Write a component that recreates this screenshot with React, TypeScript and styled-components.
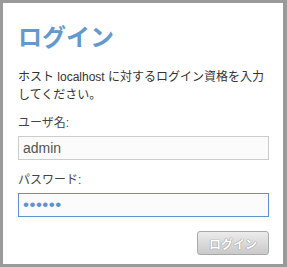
import styled, { createGlobalStyle } from "styled-components";

const GlobalStyle = createGlobalStyle`
  html, body {
    margin: 0;
    padding: 0;
    background: #ffffff;
  }
  * {
    box-sizing: border-box;
  }
`;

const Frame = styled.div`
  width: 287px;
  height: 267px;
  border: 3px solid #9a9a9a;
  border-right-width: 4px;
  background: #ffffff;
  padding: 18px 14px 0 15px;
  font-family: "Liberation Sans", "Noto Sans CJK JP", sans-serif;
  color: #333333;
`;

const Title = styled.h1`
  margin: 0;
  font-family: "Noto Sans CJK JP", sans-serif;
  font-size: 24px;
  line-height: 30px;
  font-weight: 700;
  color: #6399d0;
`;

const Message = styled.p`
  margin: 17px 0 0;
  font-size: 12px;
  line-height: 18px;
`;

const Field = styled.div<{ $gap: number }>`
  display: flex;
  flex-direction: column;
  gap: 4px;
  margin-top: ${({ $gap }) => $gap}px;
`;

const Label = styled.label`
  font-size: 12px;
  line-height: 18px;
  color: #444444;
`;

const TextInput = styled.input<{ $focused?: boolean }>`
  width: 100%;
  height: 24px;
  margin: 0;
  padding: 0 4px;
  border: 1px solid ${({ $focused }) => ($focused ? "#5b95cf" : "#cccccc")};
  background: #fbfbfb;
  font-family: "Liberation Sans", sans-serif;
  font-size: ${({ $focused }) => ($focused ? "17px" : "14px")};
  color: ${({ $focused }) => ($focused ? "#5b95cf" : "#555555")};
  caret-color: #333333;
  outline: none;
  letter-spacing: ${({ $focused }) => ($focused ? "0.5px" : "0")};
`;

const Actions = styled.div`
  display: flex;
  justify-content: flex-end;
  margin-top: 14px;
`;

const SubmitButton = styled.button`
  width: 72px;
  height: 24px;
  border: 1px solid #a9a9a9;
  border-radius: 3px;
  background: linear-gradient(#ececec, #c9c9c9);
  font-family: "Noto Sans CJK JP", sans-serif;
  font-size: 12px;
  font-weight: 700;
  color: #ffffff;
  text-shadow: 0 0 1px #8a8a8a, 0 0 1px #8a8a8a;
  padding: 0;
`;

const App = () => {
  return (
    <>
      <GlobalStyle />
      <Frame>
        <Title>ログイン</Title>
        <Message>ホスト localhost に対するログイン資格を入力してください。</Message>
        <Field $gap={10}>
          <Label>ユーザ名:</Label>
          <TextInput type="text" defaultValue="admin" />
        </Field>
        <Field $gap={11}>
          <Label>パスワード:</Label>
          <TextInput type="password" defaultValue="secret" $focused autoFocus />
        </Field>
        <Actions>
          <SubmitButton type="button">ログイン</SubmitButton>
        </Actions>
      </Frame>
    </>
  );
};

export default App;
